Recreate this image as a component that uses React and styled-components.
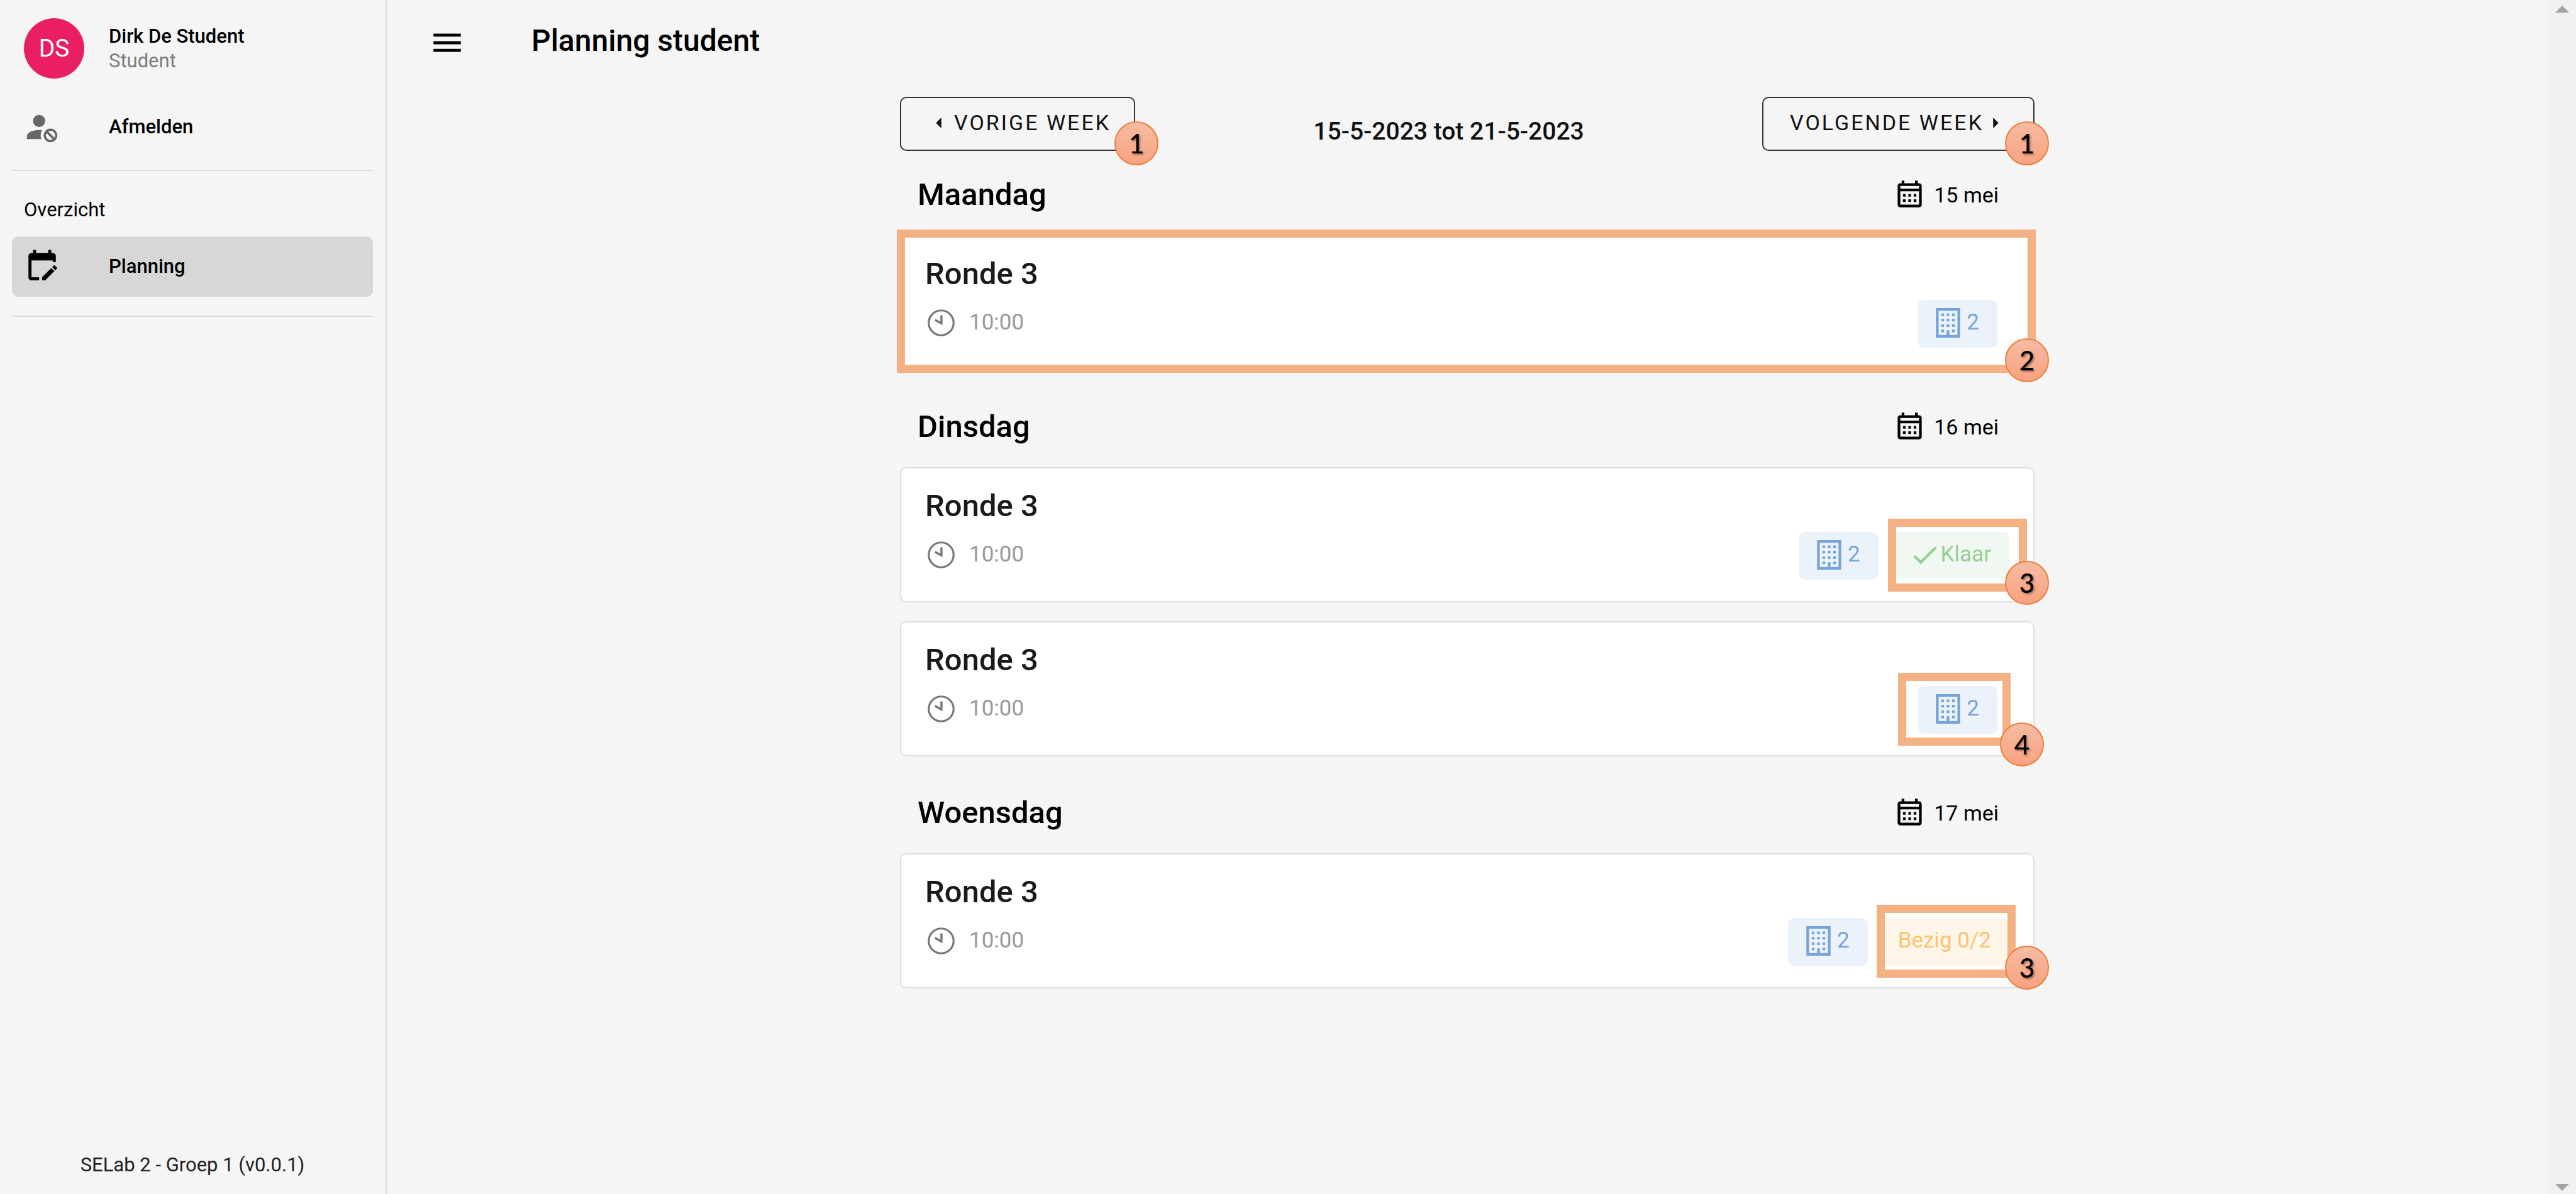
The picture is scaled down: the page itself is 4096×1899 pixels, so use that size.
import React from 'react';
import styled, { createGlobalStyle } from 'styled-components';

const GlobalStyle = createGlobalStyle`
  *, *::before, *::after { box-sizing: border-box; }
  body {
    margin: 0;
    background: #f5f5f5;
    color: #000;
    font-family: Roboto, "Liberation Sans", sans-serif;
    font-size: 34px;
    line-height: 48px;
  }
  h1, h2, h3, p { margin: 0; }
  button { font: inherit; color: inherit; background: none; cursor: pointer; }
  a { color: inherit; text-decoration: none; }
  svg { display: block; flex: none; fill: currentColor; }
`;

const Page = styled.div`
  display: flex;
  min-height: 100vh;
`;

const Sidebar = styled.aside`
  display: flex;
  flex-direction: column;
  flex: none;
  width: 615px;
  padding: 20px 20px 18px 19px;
  border-right: 2px solid #dbdbdb;
`;

const Profile = styled.div`
  display: flex;
  align-items: center;
  gap: 39px;
  height: 114px;
  padding: 0 19px;
`;

const Avatar = styled.span`
  display: grid;
  place-items: center;
  width: 96px;
  height: 96px;
  border-radius: 50%;
  background: #e91e63;
  color: #fff;
  font-size: 39px;
`;

const ProfileText = styled.div`
  display: flex;
  flex-direction: column;
`;

const ItemTitle = styled.span`
  font-size: 31px;
  line-height: 40px;
  font-weight: 500;
`;

const ItemSubtitle = styled.span`
  font-size: 31px;
  line-height: 38px;
  color: #7b7b7b;
`;

const NavLink = styled.a`
  display: flex;
  align-items: center;
  gap: 77px;
  height: 96px;
  padding: 0 19px;
  border-radius: 10px;
  background: ${(p) => (p.$active ? '#d7d7d7' : 'transparent')};

  svg { color: ${(p) => (p.$active ? '#000' : '#666')}; }
`;

const SignOut = styled.div`
  padding: 20px 0;
`;

const Divider = styled.hr`
  width: 100%;
  height: 2px;
  margin: 0;
  border: 0;
  background: #dbdbdb;
`;

const Group = styled.nav`
  padding: 38px 0 30px;
`;

const GroupTitle = styled.h2`
  padding: 0 19px 18px;
  font-size: 31px;
  line-height: 48px;
  font-weight: 400;
`;

const Version = styled.footer`
  margin-top: auto;
  text-align: center;
  font-size: 31px;
  line-height: 56px;
  color: #222;
`;

const Main = styled.main`
  flex: 1;
  min-width: 0;
`;

const TopBar = styled.header`
  display: flex;
  align-items: center;
  gap: 105px;
  height: 130px;
  padding: 6px 67px 0;
`;

const MenuButton = styled.button`
  padding: 0;
  border: 0;
`;

const PageTitle = styled.h1`
  padding-bottom: 6px;
  font-size: 48px;
  line-height: 56px;
  font-weight: 500;
`;

const Content = styled.div`
  width: 100%;
  max-width: 1804px;
  margin: 0 auto;
  padding-top: 24px;
`;

const WeekBar = styled.div`
  display: flex;
  justify-content: space-between;
  height: 86px;
`;

const Anchor = styled.div`
  position: relative;
`;

const WeekButton = styled.button`
  display: flex;
  align-items: center;
  gap: ${(p) => (p.$next ? '15px' : '20px')};
  height: 86px;
  padding: ${(p) => (p.$next ? '0 55px 4px 42px' : '0 37px 4px 55px')};
  border: 2px solid #333;
  border-radius: 10px;
  letter-spacing: 3px;
  text-transform: uppercase;
  color: #111;
`;

const WeekRange = styled.p`
  padding-top: 31px;
  font-size: 39px;
  line-height: 48px;
  font-weight: 500;
  color: #111;
`;

const DayHeader = styled.div`
  display: flex;
  align-items: center;
  justify-content: space-between;
  height: ${(p) => (p.$first ? '134px' : '124px')};
  padding: ${(p) => (p.$first ? '6px 57px 0 28px' : '0 57px 4px 28px')};
`;

const DayTitle = styled.h2`
  font-size: 49px;
  line-height: 56px;
  font-weight: 500;
`;

const DayDate = styled.span`
  display: flex;
  align-items: center;
  gap: 13px;
`;

const Card = styled.article`
  position: relative;
  height: 215px;
  margin-bottom: 30px;
  padding: 32px 38px 0;
  border: 2px solid #e0e0e0;
  border-radius: 10px;
  background: #fff;
`;

const CardTitle = styled.h3`
  font-size: 49px;
  line-height: 56px;
  font-weight: 500;
  color: #1a1a1a;
`;

const CardRow = styled.div`
  display: flex;
  align-items: center;
  justify-content: space-between;
  height: 76px;
  margin-top: 13px;
  font-size: 35px;
`;

const Time = styled.span`
  display: flex;
  align-items: center;
  gap: 19px;
  padding-bottom: 4px;
  color: #999;

  svg { color: #777; }
`;

const Chips = styled.div`
  display: flex;
`;

const tones = {
  blue: ['#ecf2fa', '#76a3d8'],
  green: ['#f1f8f1', '#94cf97'],
  orange: ['#fff6ea', '#fcc470'],
};

const Chip = styled.span`
  position: relative;
  display: flex;
  align-items: center;
  gap: ${(p) => (p.$tone === 'blue' ? '10px' : '0')};
  height: 76px;
  margin-right: ${(p) => (p.$tone === 'blue' ? '19px' : '0')};
  padding: 0 29px 4px;
  border-radius: 10px;
  background: ${(p) => tones[p.$tone][0]};
  color: ${(p) => tones[p.$tone][1]};
`;

const Frame = styled.span`
  position: absolute;
  top: ${(p) => p.$inset[0]}px;
  right: ${(p) => p.$inset[1]}px;
  bottom: ${(p) => p.$inset[2]}px;
  left: ${(p) => p.$inset[3]}px;
  border: 13px solid #f4b183;
`;

const Marker = styled.span`
  position: absolute;
  right: ${(p) => p.$at[0]}px;
  bottom: ${(p) => p.$at[1]}px;
  z-index: 1;
  display: grid;
  place-items: center;
  width: 70px;
  height: 70px;
  border: 2px solid #e9803a;
  border-radius: 50%;
  background: linear-gradient(#f6bba3, #f9a281);
  color: #000;
  font-family: Lato, "Liberation Sans", sans-serif;
  font-size: 42px;
  font-weight: 500;
  line-height: 48px;
  text-shadow: 2px 2px 3px rgba(0, 0, 0, 0.4);
`;

const ScrollTrack = styled.div`
  display: flex;
  flex-direction: column;
  justify-content: space-between;
  align-items: center;
  flex: none;
  width: 45px;
  padding: 9px 0 5px;
  background: #f0f0f0;
  color: #a3a3a3;
`;

const Icon = ({ d, size = 51, box = '0 0 24 24', width = size }) => (
  <svg width={width} height={size} viewBox={box} aria-hidden="true"><path d={d} /></svg>
);

const paths = {
  signOut: 'M10 4A4 4 0 0 0 6 8A4 4 0 0 0 10 12A4 4 0 0 0 14 8A4 4 0 0 0 10 4M17.5 13C15 13 13 15 13 17.5C13 20 15 22 17.5 22C20 22 22 20 22 17.5C22 15 20 13 17.5 13M10 14C5.58 14 2 15.79 2 18V20H11.5A6.5 6.5 0 0 1 11 17.5A6.5 6.5 0 0 1 11.95 14.14C11.32 14.06 10.68 14 10 14M17.5 14.5C19.16 14.5 20.5 15.84 20.5 17.5C20.5 18.06 20.35 18.58 20.08 19L16 14.92C16.42 14.65 16.94 14.5 17.5 14.5M14.92 16L19 20.08C18.58 20.35 18.06 20.5 17.5 20.5C15.84 20.5 14.5 19.16 14.5 17.5C14.5 16.94 14.65 16.42 14.92 16Z',
  planning: 'M19 3H18V1H16V3H8V1H6V3H5C3.89 3 3 3.9 3 5V19C3 20.11 3.9 21 5 21H10V19H5V8H19V9H21V5C21 3.9 20.11 3 19 3M21.7 13.35L20.7 14.35L18.65 12.35L19.65 11.35C19.85 11.14 20.19 11.13 20.42 11.35L21.7 12.63C21.89 12.83 21.89 13.15 21.7 13.35M12 18.94L18.07 12.88L20.12 14.88L14.06 21H12V18.94Z',
  menu: 'M3 6H21V8H3V6M3 11H21V13H3V11M3 16H21V18H3V16Z',
  calendar: 'M7 11H9V13H7V11M21 5V19C21 20.11 20.11 21 19 21H5C3.89 21 3 20.1 3 19V5C3 3.9 3.9 3 5 3H6V1H8V3H16V1H18V3H19C20.11 3 21 3.9 21 5M5 7H19V5H5V7M19 19V9H5V19H19M15 13V11H17V13H15M11 13V11H13V13H11M7 15H9V17H7V15M15 17V15H17V17H15M11 17V15H13V17H11Z',
  building: 'M19 3V21H13V17.5H11V21H5V3H19M15 7H17V5H15V7M11 7H13V5H11V7M7 7H9V5H7V7M15 11H17V9H15V11M11 11H13V9H11V11M7 11H9V9H7V11M15 15H17V13H15V15M11 15H13V13H11V15M7 15H9V13H7V15M15 19H17V17H15V19M7 19H9V17H7V19M21 1H3V23H21V1Z',
  check: 'M21,7L9,19L3.5,13.5L4.91,12.09L9,16.17L19.59,5.59L21,7Z',
};

const ClockIcon = () => (
  <svg width="51" height="51" viewBox="0 0 24 24" aria-hidden="true">
    <circle cx="12" cy="12" r="9.3" fill="none" stroke="currentColor" strokeWidth="1.5" />
    <path d="M12.2 6.4V12.4L7.4 9.8" fill="none" stroke="currentColor" strokeWidth="1.6" />
  </svg>
);

const days = [
  { name: 'Maandag', date: '15 mei', rounds: [{ frame: [-11, -4, -6, -7], marker: [-25, -21, '2'] }] },
  {
    name: 'Dinsdag',
    date: '16 mei',
    rounds: [
      { status: 'Klaar', tone: 'green', statusFrame: [-21, -28, -19, -4], marker: [-25, -6, '3'] },
      { roomFrame: [-21, -21, -19, -31], marker: [-17, -18, '4'] },
    ],
  },
  {
    name: 'Woensdag',
    date: '17 mei',
    rounds: [{ status: 'Bezig 0/2', tone: 'orange', statusFrame: [-21, -10, -19, -5], marker: [-25, -4, '3'] }],
  },
];

function Round({ round }) {
  return (
    <Card>
      <CardTitle>Ronde 3</CardTitle>
      <CardRow>
        <Time><ClockIcon />10:00</Time>
        <Chips>
          <Chip $tone="blue">
            <Icon d={paths.building} box="3 1 18 22" width={39} size={47} />2
            {round.roomFrame && <Frame $inset={round.roomFrame} />}
          </Chip>
          {round.status && (
            <Chip $tone={round.tone}>
              {round.tone === 'green' && <Icon d={paths.check} />}
              {round.status}
              <Frame $inset={round.statusFrame} />
            </Chip>
          )}
        </Chips>
      </CardRow>
      {round.frame && <Frame $inset={round.frame} />}
      <Marker $at={round.marker}>{round.marker[2]}</Marker>
    </Card>
  );
}

export default function App() {
  return (
    <>
      <GlobalStyle />
      <Page>
        <Sidebar>
          <Profile>
            <Avatar>DS</Avatar>
            <ProfileText>
              <ItemTitle>Dirk De Student</ItemTitle>
              <ItemSubtitle>Student</ItemSubtitle>
            </ProfileText>
          </Profile>
          <SignOut>
            <NavLink href="#afmelden">
              <Icon d={paths.signOut} size={58} />
              <ItemTitle>Afmelden</ItemTitle>
            </NavLink>
          </SignOut>
          <Divider />
          <Group>
            <GroupTitle>Overzicht</GroupTitle>
            <NavLink href="#planning" $active aria-current="page">
              <Icon d={paths.planning} size={58} />
              <ItemTitle>Planning</ItemTitle>
            </NavLink>
          </Group>
          <Divider />
          <Version>SELab 2 - Groep 1 (v0.0.1)</Version>
        </Sidebar>
        <Main>
          <TopBar>
            <MenuButton type="button" aria-label="Menu"><Icon d={paths.menu} size={58} /></MenuButton>
            <PageTitle>Planning student</PageTitle>
          </TopBar>
          <Content>
            <WeekBar>
              <Anchor>
                <WeekButton type="button">
                  <Icon d="M5 0L0 5L5 10Z" box="0 0 5 10" width={9} size={17} />Vorige week
                </WeekButton>
                <Marker $at={[-37, -23]}>1</Marker>
              </Anchor>
              <WeekRange>15-5-2023 tot 21-5-2023</WeekRange>
              <Anchor>
                <WeekButton type="button" $next>
                  Volgende week<Icon d="M0 0L5 5L0 10Z" box="0 0 5 10" width={9} size={17} />
                </WeekButton>
                <Marker $at={[-23, -23]}>1</Marker>
              </Anchor>
            </WeekBar>
            {days.map((day, i) => (
              <section key={day.name}>
                <DayHeader $first={i === 0}>
                  <DayTitle>{day.name}</DayTitle>
                  <DayDate><Icon d={paths.calendar} />{day.date}</DayDate>
                </DayHeader>
                {day.rounds.map((round, n) => <Round key={n} round={round} />)}
              </section>
            ))}
          </Content>
        </Main>
        <ScrollTrack aria-hidden="true">
          <Icon d="M0 11L11 0L22 11Z" box="0 0 22 11" width={22} size={11} />
          <Icon d="M0 0L11 11L22 0Z" box="0 0 22 11" width={22} size={11} />
        </ScrollTrack>
      </Page>
    </>
  );
}
